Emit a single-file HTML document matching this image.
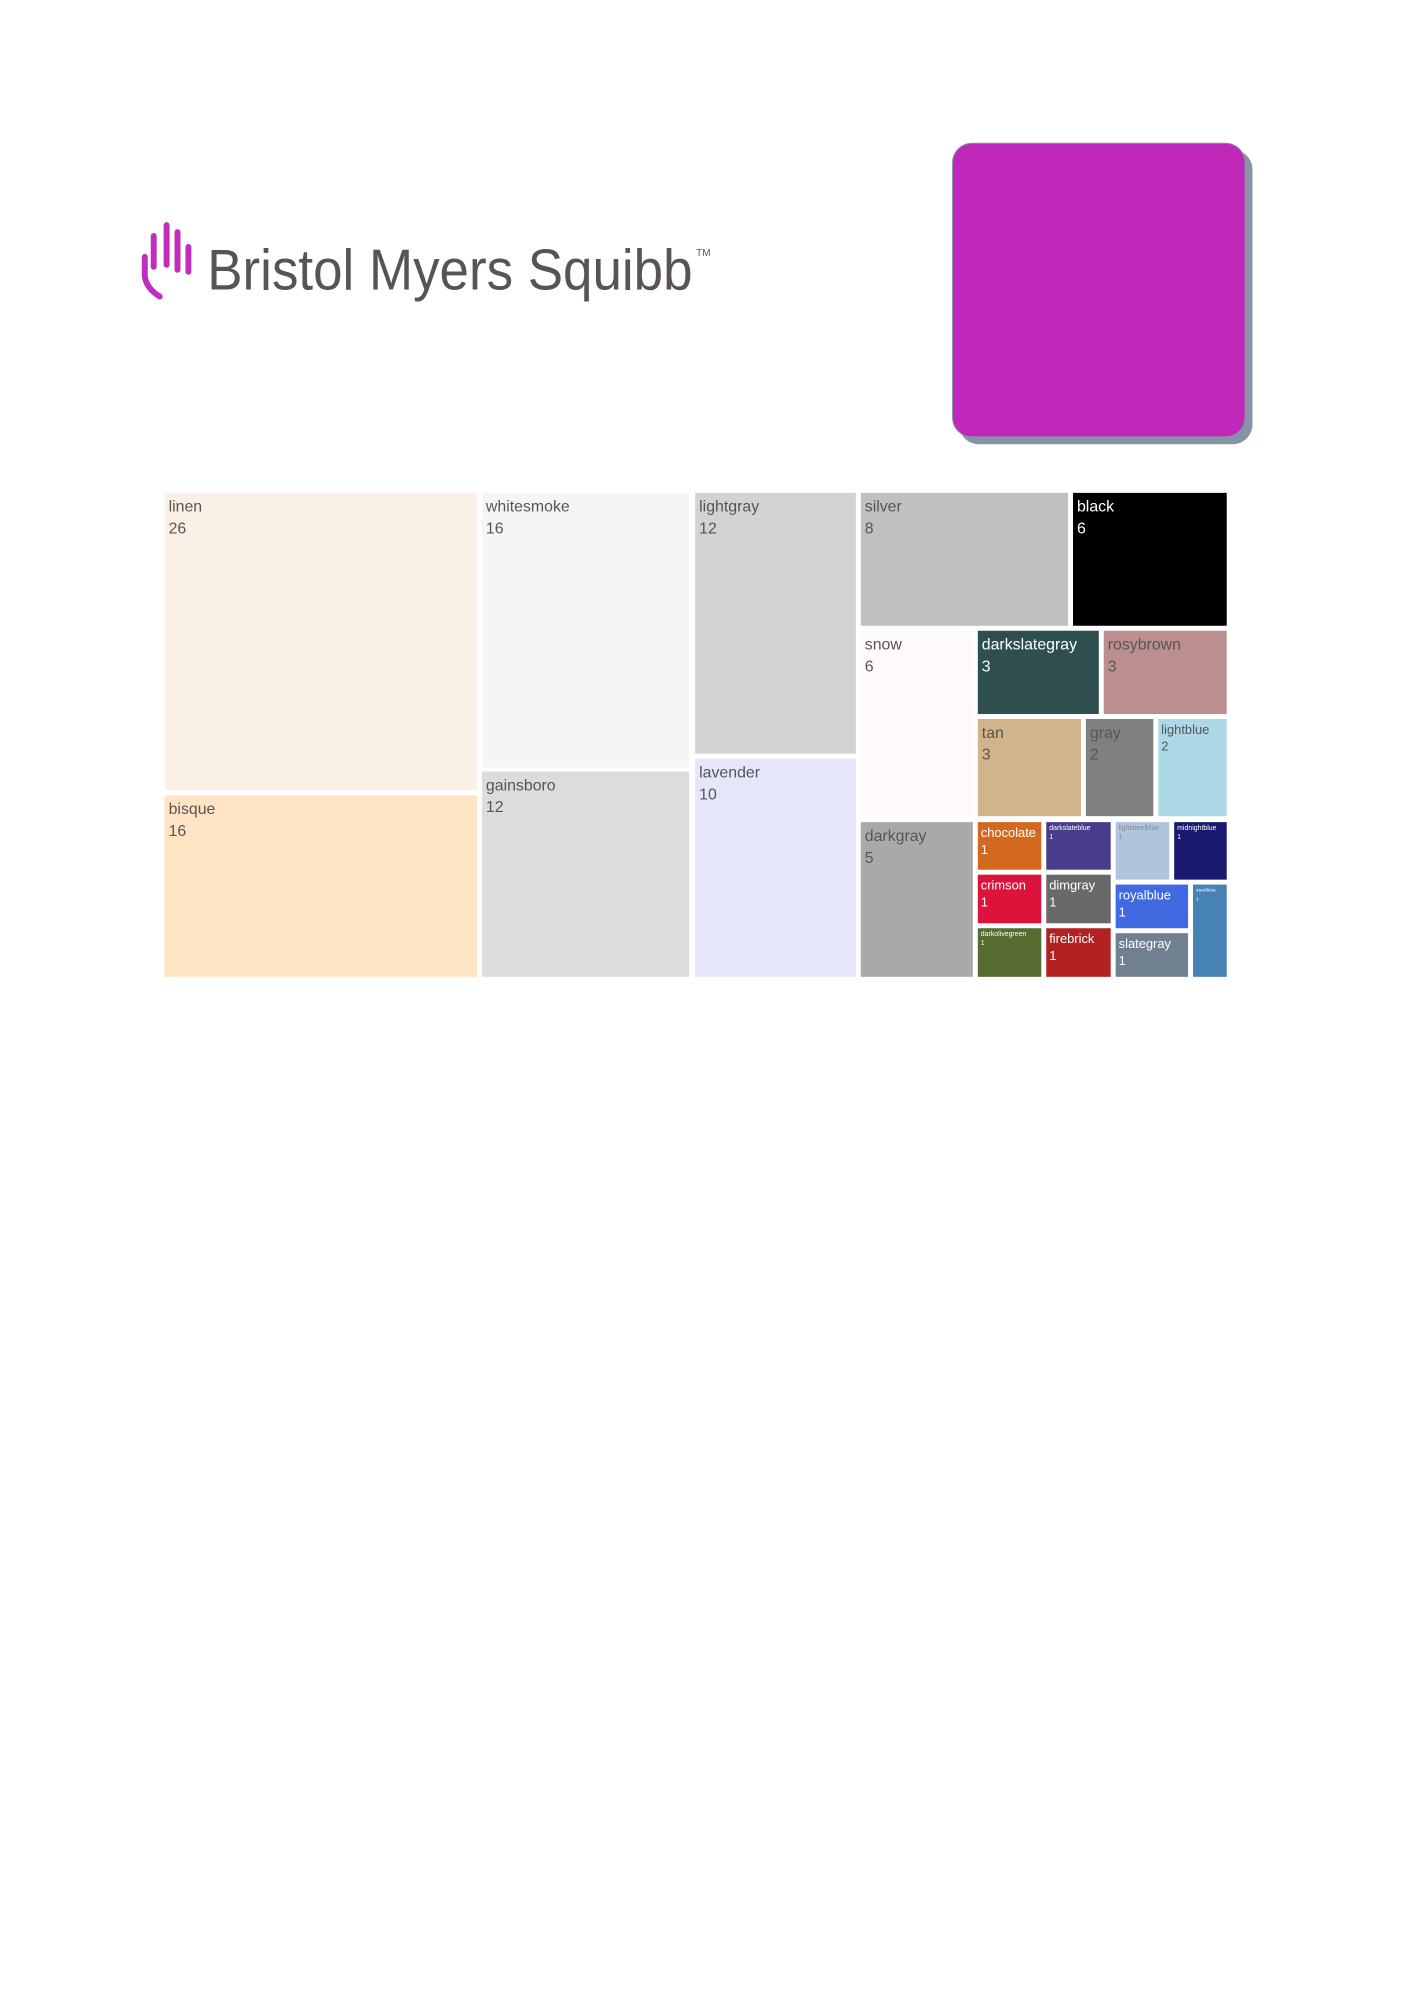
<!DOCTYPE html>
<html><head><meta charset="utf-8"><style>
html,body{margin:0;padding:0;background:#fff;}
body{width:1414px;height:2000px;position:relative;overflow:hidden;font-family:"Liberation Sans",sans-serif;}
#wrap{position:absolute;left:0;top:0;width:1414px;height:2000px;transform:scale(0.9917);transform-origin:0 0;}
.t{position:absolute;box-sizing:border-box;padding:4px 4px;font-size:16px;line-height:22px;color:#555;overflow:hidden;white-space:nowrap;}
.w{color:#fff;}
.s{font-size:13px;line-height:17px;padding:2px 3px;}
.xs{font-size:7px;line-height:9px;padding:2px 3px;}
</style></head><body><div id="wrap">
<svg style="position:absolute;left:0;top:0" width="260" height="320">
<g stroke="#c02ebe" stroke-width="6" stroke-linecap="round" fill="none">
<line x1="155" y1="238" x2="155" y2="269"/>
<line x1="168" y1="227" x2="168" y2="267"/>
<line x1="179" y1="234" x2="179" y2="272"/>
<line x1="190" y1="249" x2="190" y2="274"/>
<path d="M146 259 L146 279 Q148 291 161 299"/>
</g></svg>
<div style="position:absolute;left:209px;top:238px;font-size:58px;line-height:70px;color:#595454;transform:scaleX(0.92);transform-origin:left top;white-space:nowrap;">Bristol Myers Squibb</div>
<div style="position:absolute;left:702px;top:250px;font-size:10px;color:#595454;">TM</div>
<div style="position:absolute;left:967px;top:151px;width:296px;height:297px;border-radius:20px;background:#8595a6;"></div>
<div style="position:absolute;left:960px;top:144px;width:296px;height:297px;border-radius:20px;background:#bf28b8;border:1.5px solid #8595a6;box-sizing:border-box;"></div>

<div class="t" style="left:166px;top:497px;width:315px;height:300px;background:#faf0e6">linen<br>26</div>
<div class="t" style="left:166px;top:802px;width:315px;height:183px;background:#ffe4c4">bisque<br>16</div>
<div class="t" style="left:486px;top:497px;width:209px;height:277px;background:#f5f5f5">whitesmoke<br>16</div>
<div class="t" style="left:486px;top:778px;width:209px;height:207px;background:#dcdcdc">gainsboro<br>12</div>
<div class="t" style="left:701px;top:497px;width:162px;height:263px;background:#d3d3d3">lightgray<br>12</div>
<div class="t" style="left:701px;top:765px;width:162px;height:220px;background:#e6e6fa">lavender<br>10</div>
<div class="t" style="left:868px;top:497px;width:209px;height:134px;background:#c0c0c0">silver<br>8</div>
<div class="t w" style="left:1082px;top:497px;width:155px;height:134px;background:#000">black<br>6</div>
<div class="t" style="left:868px;top:636px;width:113px;height:188px;background:#fffafa">snow<br>6</div>
<div class="t w" style="left:986px;top:636px;width:122px;height:84px;background:#2f4f4f">darkslategray<br>3</div>
<div class="t" style="left:1113px;top:636px;width:124px;height:84px;background:#bc8f8f">rosybrown<br>3</div>
<div class="t" style="left:986px;top:725px;width:104px;height:98px;background:#d2b48c">tan<br>3</div>
<div class="t" style="left:1095px;top:725px;width:68px;height:98px;background:#808080">gray<br>2</div>
<div class="t s" style="left:1168px;top:725px;width:69px;height:98px;background:#add8e6">lightblue<br>2</div>
<div class="t" style="left:868px;top:829px;width:113px;height:156px;background:#a9a9a9">darkgray<br>5</div>
<div class="t w s" style="left:986px;top:829px;width:64px;height:48px;background:#d2691e">chocolate<br>1</div>
<div class="t w xs" style="left:1055px;top:829px;width:65px;height:48px;background:#483d8b">darkslateblue<br>1</div>
<div class="t w s" style="left:986px;top:882px;width:64px;height:49px;background:#dc143c">crimson<br>1</div>
<div class="t w s" style="left:1055px;top:882px;width:65px;height:49px;background:#696969">dimgray<br>1</div>
<div class="t w xs" style="left:986px;top:936px;width:64px;height:49px;background:#556b2f">darkolivegreen<br>1</div>
<div class="t w s" style="left:1055px;top:936px;width:65px;height:49px;background:#b22222">firebrick<br>1</div>
<div class="t xs" style="left:1125px;top:829px;width:54px;height:58px;background:#b0c4de;color:#889">lightsteelblue<br>1</div>
<div class="t w xs" style="left:1184px;top:829px;width:53px;height:58px;background:#191970">midnightblue<br>1</div>
<div class="t w s" style="left:1125px;top:892px;width:73px;height:44px;background:#4169e1">royalblue<br>1</div>
<div class="t w s" style="left:1125px;top:941px;width:73px;height:44px;background:#708090">slategray<br>1</div>
<div class="t w xs" style="left:1203px;top:892px;width:34px;height:93px;background:#4682b4;font-size:5px">steelblue<br>1</div>
</div></body></html>
